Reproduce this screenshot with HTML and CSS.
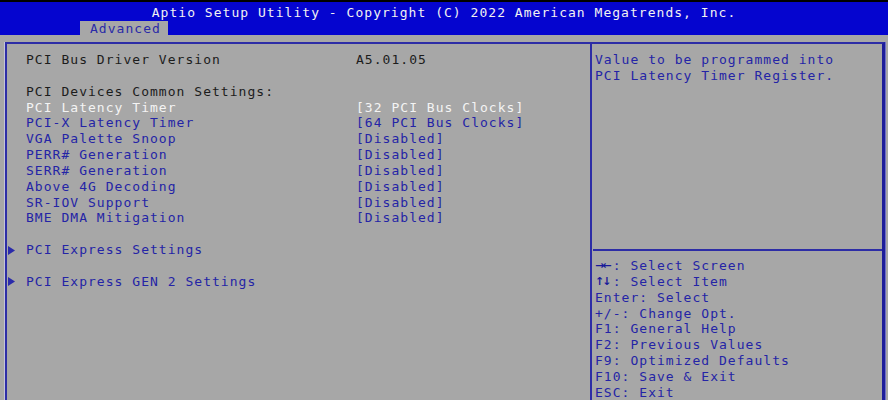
FILE: index.html
```html
<!DOCTYPE html>
<html>
<head>
<meta charset="utf-8">
<link rel="stylesheet" href="styles.css">
</head>
<body>
<div class="screen">
  <header class="header">
    <div class="title">Aptio Setup Utility - Copyright (C) 2022 American Megatrends, Inc.</div>
    <div class="tabs"><span class="tab">Advanced</span></div>
  </header>
  <main class="frame">
    <section class="main-panel">
      <div class="row"><span class="mark"></span><span class="label dark">PCI Bus Driver Version</span><span class="value dark">A5.01.05</span></div>
      <div class="row blank"></div>
      <div class="row"><span class="mark"></span><span class="label dark">PCI Devices Common Settings:</span></div>
      <div class="row selected"><span class="mark"></span><span class="label">PCI Latency Timer</span><span class="value">[32 PCI Bus Clocks]</span></div>
      <div class="row"><span class="mark"></span><span class="label">PCI-X Latency Timer</span><span class="value">[64 PCI Bus Clocks]</span></div>
      <div class="row"><span class="mark"></span><span class="label">VGA Palette Snoop</span><span class="value">[Disabled]</span></div>
      <div class="row"><span class="mark"></span><span class="label">PERR# Generation</span><span class="value">[Disabled]</span></div>
      <div class="row"><span class="mark"></span><span class="label">SERR# Generation</span><span class="value">[Disabled]</span></div>
      <div class="row"><span class="mark"></span><span class="label">Above 4G Decoding</span><span class="value">[Disabled]</span></div>
      <div class="row"><span class="mark"></span><span class="label">SR-IOV Support</span><span class="value">[Disabled]</span></div>
      <div class="row"><span class="mark"></span><span class="label">BME DMA Mitigation</span><span class="value">[Disabled]</span></div>
      <div class="row blank"></div>
      <div class="row"><span class="mark"><svg class="tri" width="7" height="9" viewBox="0 0 7 9"><polygon points="0,0 7,4.5 0,9"/></svg></span><span class="label wide">PCI Express Settings</span></div>
      <div class="row blank"></div>
      <div class="row"><span class="mark"><svg class="tri" width="7" height="9" viewBox="0 0 7 9"><polygon points="0,0 7,4.5 0,9"/></svg></span><span class="label wide">PCI Express GEN 2 Settings</span></div>
    </section>
    <aside class="side-panel">
      <div class="help">
        <div class="line">Value to be programmed into</div>
        <div class="line">PCI Latency Timer Register.</div>
      </div>
      <div class="keys">
        <div class="line"><b class="arr">→←</b>: Select Screen</div>
        <div class="line"><b class="arr">↑↓</b>: Select Item</div>
        <div class="line">Enter: Select</div>
        <div class="line">+/-: Change Opt.</div>
        <div class="line">F1: General Help</div>
        <div class="line">F2: Previous Values</div>
        <div class="line">F9: Optimized Defaults</div>
        <div class="line">F10: Save &amp; Exit</div>
        <div class="line">ESC: Exit</div>
      </div>
    </aside>
  </main>
</div>
</body>
</html>
```

FILE: styles.css
```css
html, body {
  margin: 0;
  padding: 0;
}
body {
  width: 888px;
  height: 400px;
  overflow: hidden;
  background: #a7a7a7;
  font-family: "DejaVu Sans Mono", "Liberation Mono", monospace;
  font-size: 13px;
  letter-spacing: 1.03px;
  color: #2424a6;
}
.screen {
  display: flex;
  flex-direction: column;
  height: 400px;
}
.header {
  background: #0505cf;
  border-top: 2px solid #000;
  height: 33px;
  display: flex;
  flex-direction: column;
}
.title {
  height: 19px;
  line-height: 21px;
  text-align: center;
  color: #f2f2f2;
  white-space: pre;
}
.tabs {
  flex: 1;
  display: flex;
  padding-left: 80px;
}
.tab {
  background: #a7a7a7;
  color: #2a2aa8;
  width: 78px;
  padding-left: 10px;
  line-height: 15px;
  height: 14px;
}
.frame {
  flex: 1;
  margin: 7px 3px 0 5px;
  border-top: 2px solid #2d2da6;
  border-left: 2px solid #2d2da6;
  border-right: 3px solid #1e1e9a;
  box-shadow: -1px 0 0 #c4c4d8, 1px 0 0 #6f6fc8;
  display: flex;
}
.main-panel {
  width: 583px;
  padding-top: 8px;
  border-right: 2px solid #2d2da6;
}
.row {
  display: grid;
  grid-template-columns: 19px 330px auto;
  height: 15.85px;
  line-height: 15.85px;
  white-space: pre;
}
.mark {
  display: flex;
  align-items: center;
  padding-left: 1px;
}
.tri {
  fill: #2a2aaa;
}
.label.wide {
  grid-column: 2 / 4;
}
.dark {
  color: #1c1c1c;
}
.selected {
  color: #f4f4f4;
}
.side-panel {
  flex: 1;
  display: flex;
  flex-direction: column;
}
.help {
  height: 197px;
  padding: 8px 0 0 2px;
  border-bottom: 2px solid #2d2da6;
  margin-left: 1px;
}
.keys {
  padding: 7px 0 0 3px;
}
.line {
  height: 15.85px;
  line-height: 15.85px;
  white-space: pre;
}
.arr {
  display: inline-block;
  width: 17.7px;
  color: #1a1a9a;
  font-family: "DejaVu Sans", sans-serif;
  font-size: 11px;
  letter-spacing: -2px;
  font-weight: bold;
  vertical-align: top;
}
```
